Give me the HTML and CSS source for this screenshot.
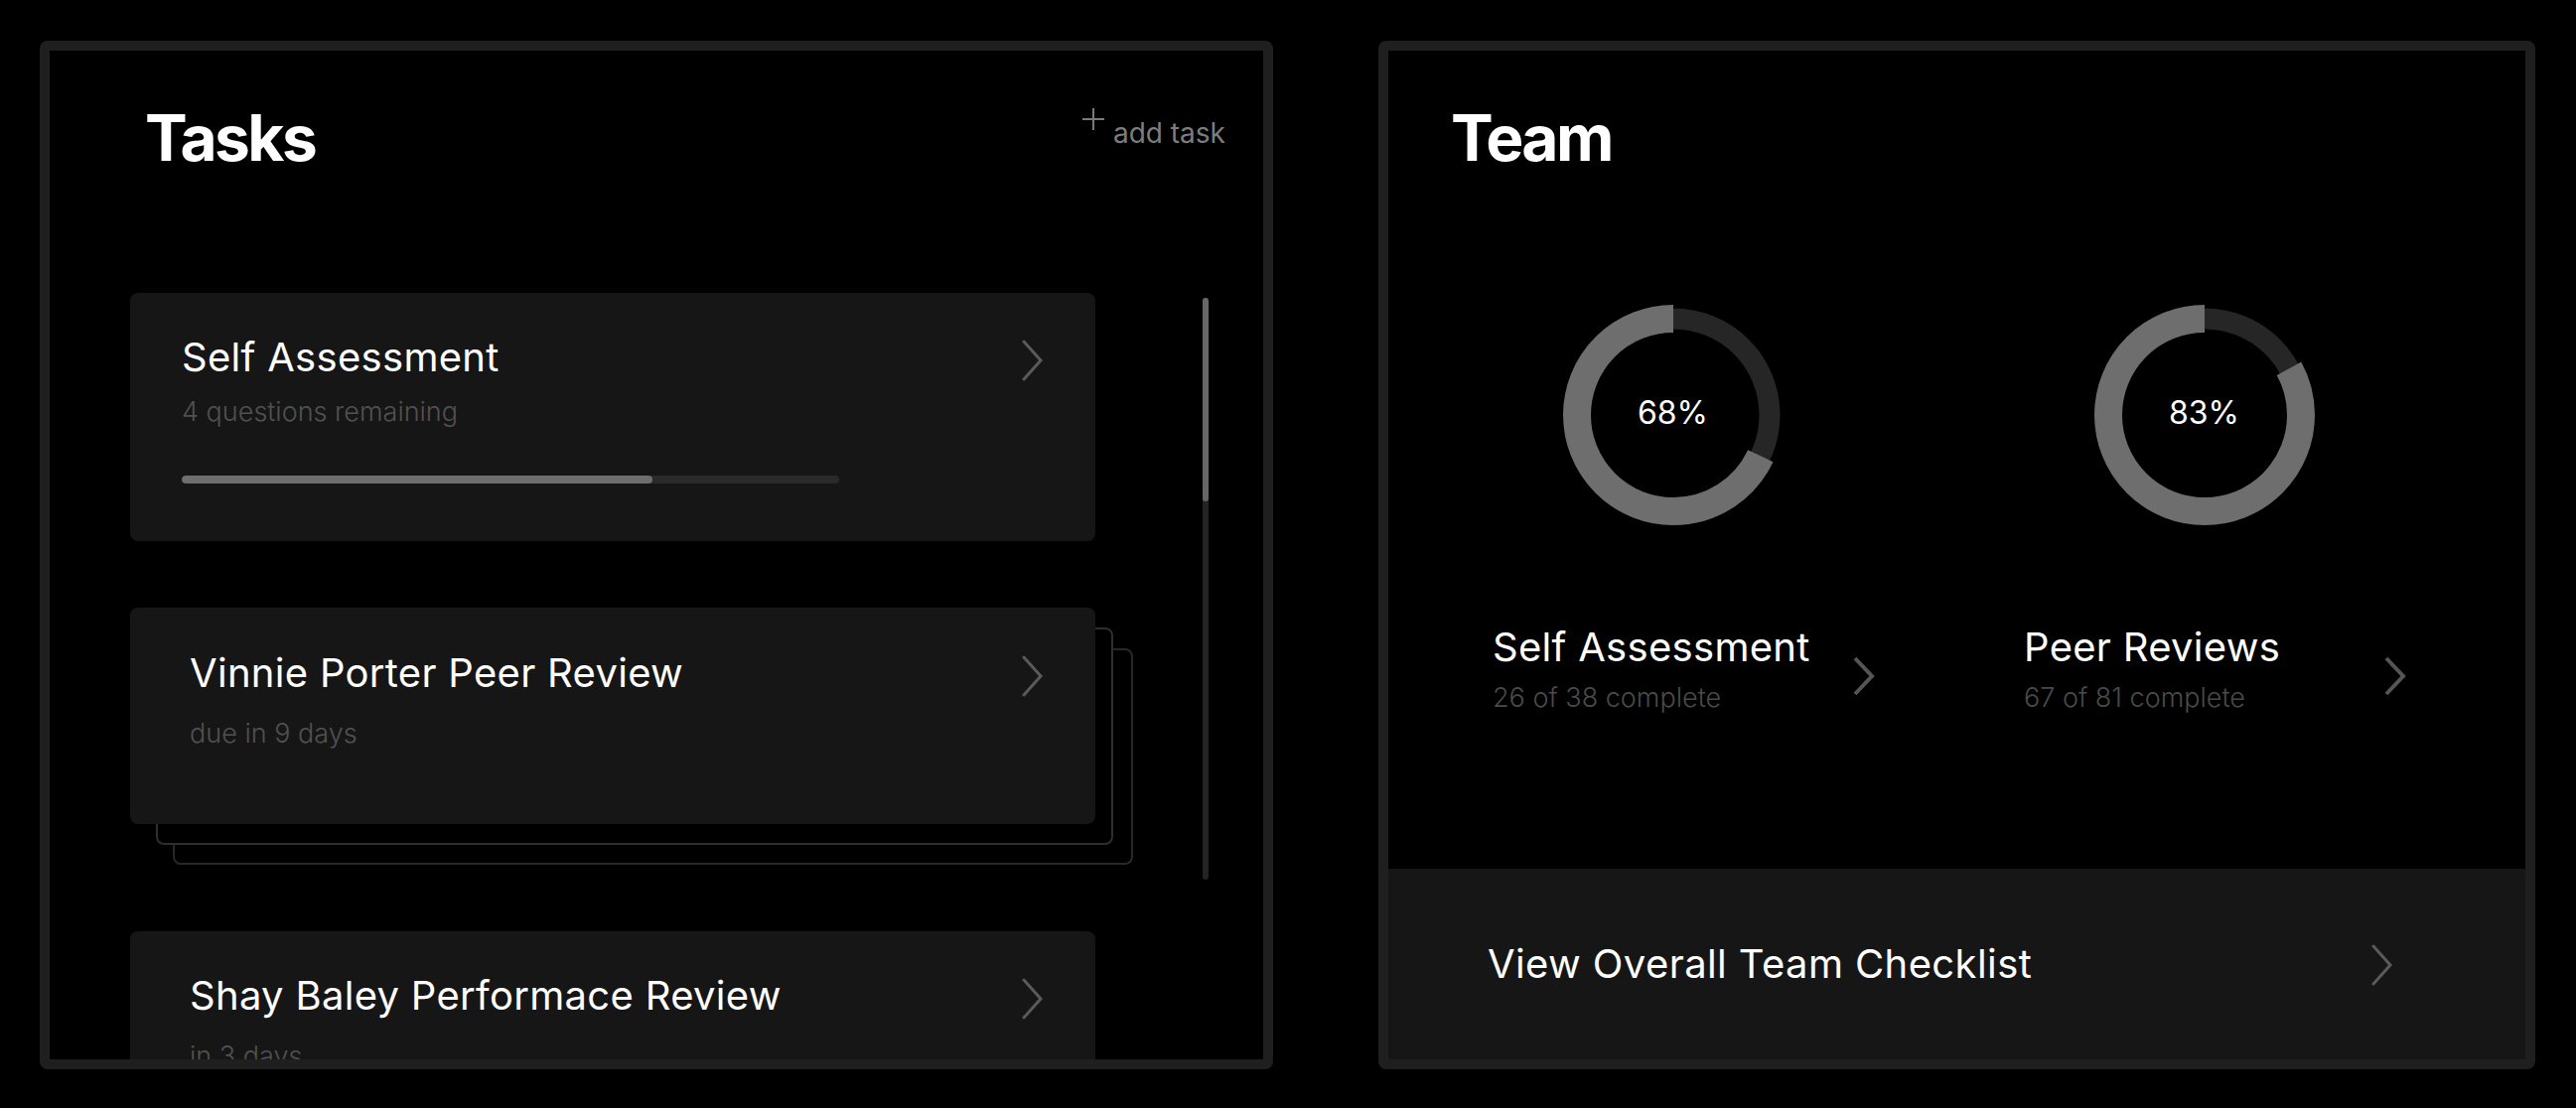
FILE: index.html
```html
<!DOCTYPE html>
<html lang="en">
<head>
<meta charset="utf-8">
<title>Tasks and Team</title>
<link rel="stylesheet" href="styles.css">
</head>
<body>
<div class="page">
  <section class="panel tasks">
    <header class="panel-head">
      <h1 class="panel-title">Tasks</h1>
      <div class="add-task">
        <svg class="plus" width="24" height="24" viewBox="0 0 24 24"><path d="M12 1 V23 M1 12 H23" fill="none" stroke="#7a7a7a" stroke-width="2"/></svg>
        <span class="add-label">add task</span>
      </div>
    </header>
    <div class="task-area">
      <div class="task-list">
        <div class="card card-first">
          <div class="card-row">
            <div class="card-title">Self Assessment</div>
            <svg class="chev" width="22" height="42" viewBox="0 0 22 42"><path d="M2 2 L19 21 L2 40" fill="none" stroke="#5a5a5a" stroke-width="3" stroke-linecap="round" stroke-linejoin="miter"/></svg>
          </div>
          <div class="card-sub">4 questions remaining</div>
          <div class="progress"><div class="progress-fill" style="width:71.6%"></div></div>
        </div>
        <div class="stack">
          <div class="stack-layer layer-3"></div>
          <div class="stack-layer layer-2"></div>
          <div class="card card-stacked">
            <div class="card-row">
              <div class="card-title">Vinnie Porter Peer Review</div>
              <svg class="chev" width="22" height="42" viewBox="0 0 22 42"><path d="M2 2 L19 21 L2 40" fill="none" stroke="#5a5a5a" stroke-width="3" stroke-linecap="round"/></svg>
            </div>
            <div class="card-sub sub-wide">due in 9 days</div>
          </div>
        </div>
        <div class="card card-last">
          <div class="card-row">
            <div class="card-title">Shay Baley Performace Review</div>
            <svg class="chev" width="22" height="42" viewBox="0 0 22 42"><path d="M2 2 L19 21 L2 40" fill="none" stroke="#5a5a5a" stroke-width="3" stroke-linecap="round"/></svg>
          </div>
          <div class="card-sub sub-wide">in 3 days</div>
        </div>
      </div>
      <div class="scrollbar"><div class="scroll-thumb"></div></div>
    </div>
  </section>

  <section class="panel team">
    <header class="panel-head team-head">
      <h1 class="panel-title">Team</h1>
    </header>
    <div class="stats">
      <div class="stat">
        <div class="donut">
          <svg width="224" height="224" viewBox="0 0 224 224">
            <circle cx="112" cy="112" r="97" fill="none" stroke="#262626" stroke-width="21"/>
            <circle cx="112" cy="112" r="97" fill="none" stroke="#6e6e6e" stroke-width="28" pathLength="100" stroke-dasharray="68 32" stroke-dashoffset="68" transform="rotate(-90 112 112)"/>
          </svg>
          <div class="donut-text">68%</div>
        </div>
        <div class="stat-label">
          <div>
            <div class="stat-title">Self Assessment</div>
            <div class="stat-sub">26 of 38 complete</div>
          </div>
          <svg class="stat-chev" width="22" height="40" viewBox="0 0 22 40"><path d="M2 2 L19 20 L2 38" fill="none" stroke="#555555" stroke-width="4"/></svg>
        </div>
      </div>
      <div class="stat">
        <div class="donut">
          <svg width="224" height="224" viewBox="0 0 224 224">
            <circle cx="112" cy="112" r="97" fill="none" stroke="#262626" stroke-width="21"/>
            <circle cx="112" cy="112" r="97" fill="none" stroke="#6e6e6e" stroke-width="28" pathLength="100" stroke-dasharray="83 17" stroke-dashoffset="83" transform="rotate(-90 112 112)"/>
          </svg>
          <div class="donut-text">83%</div>
        </div>
        <div class="stat-label">
          <div>
            <div class="stat-title">Peer Reviews</div>
            <div class="stat-sub">67 of 81 complete</div>
          </div>
          <svg class="stat-chev" width="22" height="40" viewBox="0 0 22 40"><path d="M2 2 L19 20 L2 38" fill="none" stroke="#555555" stroke-width="4"/></svg>
        </div>
      </div>
    </div>
    <div class="checklist">
      <div class="checklist-label">View Overall Team Checklist</div>
      <svg class="chev" width="22" height="42" viewBox="0 0 22 42"><path d="M2 2 L19 21 L2 40" fill="none" stroke="#5a5a5a" stroke-width="3" stroke-linecap="round"/></svg>
    </div>
  </section>
</div>
</body>
</html>
```

FILE: styles.css
```css
* { box-sizing: border-box; }

html, body {
  margin: 0;
  padding: 0;
  background: #000;
}

body {
  font-family: "Inter", "Noto Sans", sans-serif;
  color: #fff;
}

.page {
  display: flex;
  gap: 106px;
  padding: 41px 41px 39px 40px;
  width: 2594px;
  height: 1116px;
}

.panel {
  height: 1036px;
  border: 10px solid #1f1f1f;
  border-radius: 8px;
  background: #000;
  overflow: hidden;
  display: flex;
  flex-direction: column;
}

.tasks { width: 1242px; }
.team { width: 1165px; }

.panel-head {
  display: flex;
  justify-content: space-between;
  align-items: flex-start;
  padding: 56px 38px 0 96px;
  flex: none;
}

.team-head { padding-left: 63px; }

.panel-title {
  margin: 0;
  font-size: 64px;
  line-height: 64px;
  font-weight: 700;
  letter-spacing: -0.04em;
  color: #fff;
}

.add-task {
  display: flex;
  align-items: flex-start;
  gap: 8px;
  margin-top: 1px;
}

.plus { display: block; }

.add-label {
  margin-top: 12px;
  font-size: 28px;
  line-height: 28px;
  font-weight: 400;
  color: #7d7d7d;
}

/* task list */
.task-area {
  display: flex;
  align-items: flex-start;
  margin-top: 124px;
  flex: 1;
  min-height: 0;
}

.task-list {
  width: 972px;
  margin-left: 81px;
  flex: none;
}

.card {
  background: #161616;
  border-radius: 8px;
  padding: 45px 52px 58px 52px;
}

.card-first { margin-bottom: 67px; }

.card-stacked {
  position: relative;
  padding: 46px 52px 78px 60px;
}

.card-last { padding: 45px 52px 40px 60px; }

.card-row {
  display: flex;
  justify-content: space-between;
  align-items: flex-start;
}

.card-title {
  font-size: 40px;
  line-height: 40px;
  font-weight: 400;
  letter-spacing: 0.3px;
  color: #fff;
}

.chev {
  display: block;
  flex: none;
  margin-top: 2px;
}

.card-sub {
  margin-top: 17px;
  font-size: 27px;
  line-height: 27px;
  font-weight: 300;
  color: #515151;
}

.sub-wide { margin-top: 23px; }

.progress {
  margin-top: 51px;
  width: 662px;
  height: 8px;
  border-radius: 4px;
  background: #2a2a2a;
  overflow: hidden;
}

.progress-fill {
  height: 100%;
  border-radius: 4px;
  background: #6e6e6e;
}

.stack {
  position: relative;
  margin-bottom: 108px;
}

.stack-layer {
  position: absolute;
  border: 2px solid #2e2e2e;
  border-radius: 8px;
  background: #000;
}

.layer-2 { left: 26px; right: -18px; top: 20px; bottom: -21px; }
.layer-3 { left: 43px; right: -38px; top: 41px; bottom: -41px; border-color: #282828; }

.scrollbar {
  flex: none;
  width: 6px;
  height: 586px;
  margin-left: 108px;
  margin-top: 5px;
  border-radius: 3px;
  background: #242424;
}

.scroll-thumb {
  height: 205px;
  border-radius: 3px;
  background: #666;
}

/* team */
.stats {
  display: grid;
  grid-template-columns: 535px 535px;
  margin-top: 135px;
  padding-left: 19px;
}

.donut {
  display: grid;
  justify-self: center;
  width: 224px;
  height: 224px;
  margin: 0 auto;
}

.donut > svg,
.donut > .donut-text {
  grid-area: 1 / 1;
}

.donut svg { display: block; }

.donut-text {
  align-self: center;
  justify-self: center;
  margin-top: -4px;
  font-size: 32px;
  line-height: 32px;
  font-weight: 400;
  color: #fff;
}

.stat-label {
  display: flex;
  justify-content: space-between;
  align-items: flex-start;
  margin-top: 102px;
  padding: 0 64px 0 86px;
}

.stat-title {
  font-size: 40px;
  line-height: 40px;
  font-weight: 400;
  letter-spacing: 0.3px;
  color: #fff;
}

.stat-sub {
  margin-top: 17px;
  font-size: 27px;
  line-height: 27px;
  font-weight: 300;
  color: #4a4a4a;
}

.stat-chev {
  display: block;
  flex: none;
  margin-top: 29px;
}

.checklist {
  margin-top: auto;
  height: 192px;
  flex: none;
  display: flex;
  align-items: center;
  justify-content: space-between;
  padding: 0 133px 0 100px;
  background: #161616;
}

.checklist-label {
  font-size: 40px;
  line-height: 40px;
  font-weight: 400;
  letter-spacing: 0.4px;
  color: #fff;
}
```
